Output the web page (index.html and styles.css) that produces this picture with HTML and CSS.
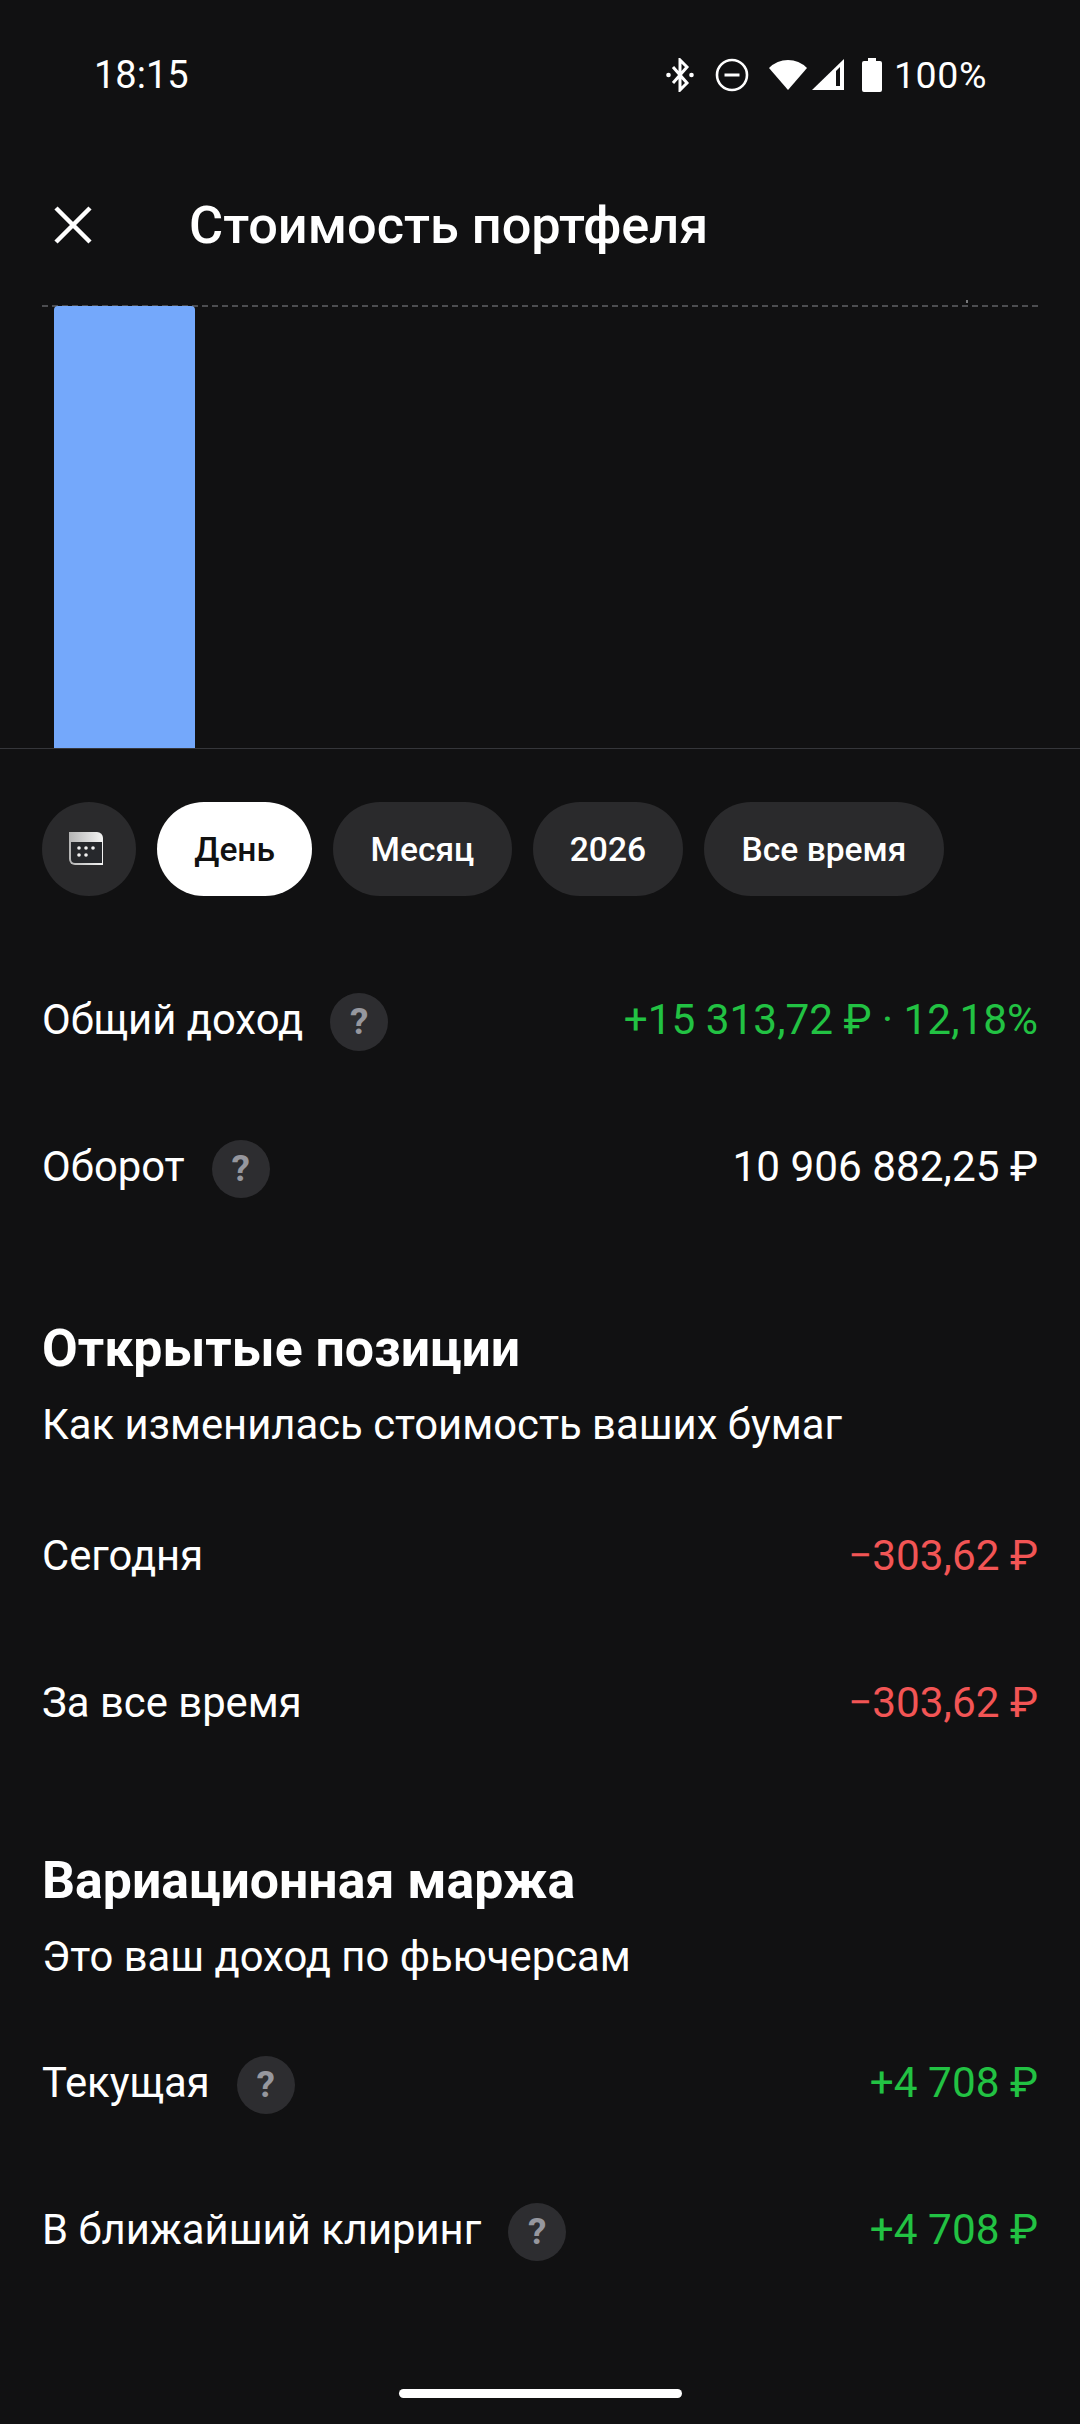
FILE: index.html
```html
<!DOCTYPE html>
<html lang="ru">
<head>
  <meta charset="UTF-8">
  <title>Стоимость портфеля</title>
  <link rel="stylesheet" href="styles.css">
</head>
<body>
  <div class="status-bar">
    <span class="clock">18:15</span>
    <div class="status-icons">
      <svg class="ic-bt" viewBox="0 0 28 34" width="28" height="34"><path d="M7 9l14 16-7 7V2l7 7L7 25" fill="none" stroke="#fff" stroke-width="3"/><circle cx="2.500" cy="17" r="2.300" fill="#fff"/><circle cx="25.500" cy="17" r="2.300" fill="#fff"/></svg>
      <svg class="ic-dnd" viewBox="0 0 34 34" width="34" height="34"><circle cx="17" cy="17" r="15" fill="none" stroke="#fff" stroke-width="2.600"/><path d="M9.500 17h15" stroke="#fff" stroke-width="3"/></svg>
      <svg class="ic-wifi" viewBox="0 0 40 32" width="40" height="32"><path d="M20 31L1 9Q9 1 20 1T39 9z" fill="#fff"/></svg>
      <svg class="ic-signal" viewBox="0 0 32 32" width="32" height="32"><path d="M32 0v31H0z" fill="#fff"/><path d="M24 12v15h4V8z" fill="#111112"/></svg>
      <svg class="ic-batt" viewBox="0 0 20 34" width="20" height="34"><path d="M6 0h8v3h4a2 2 0 0 1 2 2v27a2 2 0 0 1-2 2H2a2 2 0 0 1-2-2V5a2 2 0 0 1 2-2h4z" fill="#fff"/></svg>
      <span class="batt-text">100%</span>
    </div>
  </div>

  <header class="top-bar">
    <svg class="close" viewBox="0 0 40 40" width="40" height="40"><path d="M3 3l34 34M37 3L3 37" stroke="#fff" stroke-width="4.500" fill="none"/></svg>
    <h1>Стоимость портфеля</h1>
  </header>

  <div class="chart">
    <div class="chart-top"></div>
    <div class="bar"></div>
    <div class="tick"></div>
  </div>

  <div class="chips">
    <div class="chip chip-icon">
      <svg viewBox="0 0 36 36" width="36" height="36"><defs><linearGradient id="calTop" x1="0" x2="1" y1="0" y2="0"><stop offset="0" stop-color="#b4b4b4"/><stop offset="1" stop-color="#f4f4f4"/></linearGradient></defs><path d="M1 1h28a6 6 0 0 1 6 6v27H7a6 6 0 0 1-6-6z" fill="url(#calTop)"/><path d="M3 11h31v21H7a4 4 0 0 1-4-4z" fill="#26282c"/><g fill="#f2f2f2"><circle cx="11" cy="17" r="1.800"/><circle cx="18" cy="17" r="1.800"/><circle cx="25" cy="17" r="1.800"/><circle cx="11" cy="24" r="1.800"/><circle cx="18" cy="24" r="1.800"/></g></svg>
    </div>
    <div class="chip active">День</div>
    <div class="chip">Месяц</div>
    <div class="chip">2026</div>
    <div class="chip">Все время</div>
  </div>

  <section class="rows first">
    <div class="row">
      <div class="label">Общий доход <span class="help">?</span></div>
      <div class="value green">+15 313,72 ₽ · 12,18%</div>
    </div>
    <div class="row">
      <div class="label">Оборот <span class="help">?</span></div>
      <div class="value">10 906 882,25 ₽</div>
    </div>
  </section>

  <section class="group">
    <h2>Открытые позиции</h2>
    <p>Как изменилась стоимость ваших бумаг</p>
    <div class="rows">
      <div class="row">
        <div class="label">Сегодня</div>
        <div class="value red">−303,62 ₽</div>
      </div>
      <div class="row">
        <div class="label">За все время</div>
        <div class="value red">−303,62 ₽</div>
      </div>
    </div>
  </section>

  <section class="group second">
    <h2>Вариационная маржа</h2>
    <p>Это ваш доход по фьючерсам</p>
    <div class="rows tight">
      <div class="row">
        <div class="label">Текущая <span class="help">?</span></div>
        <div class="value green">+4 708 ₽</div>
      </div>
      <div class="row">
        <div class="label">В ближайший клиринг <span class="help">?</span></div>
        <div class="value green">+4 708 ₽</div>
      </div>
    </div>
  </section>

  <div class="home-bar"></div>
</body>
</html>
```

FILE: styles.css
```css
* {
  box-sizing: border-box;
}

html,
body {
  margin: 0;
  background: #111112;
}

body {
  position: relative;
  width: 1080px;
  height: 2424px;
  overflow: hidden;
  font-family: Roboto, sans-serif;
  color: #fff;
}

.status-bar {
  display: flex;
  justify-content: space-between;
  align-items: center;
  height: 110px;
  padding: 40px 93px 0 94px;
}

.clock {
  font-size: 38px;
}

.status-icons {
  display: flex;
  align-items: center;
}

.ic-bt {
  margin-right: 21px;
}

.ic-wifi {
  margin: 0 0 0 19px;
}

.ic-signal {
  margin: 0 18px 0 4px;
}

.batt-text {
  margin-left: 12px;
  font-size: 37.500px;
  letter-spacing: 0.6px;
}

.top-bar {
  display: flex;
  align-items: center;
  height: 80px;
  margin-top: 75px;
  padding-left: 53px;
}

.close {
  width: 40px;
  height: 40px;
}

.top-bar h1 {
  margin: 0 0 0 96px;
  font-size: 52.300px;
  font-weight: 500;
}

.chart {
  position: relative;
  height: 444px;
  margin-top: 40px;
  border-bottom: 1px solid #35363a;
}

.chart-top {
  margin: 0 42px;
  border-top: 2px dashed #4c4d50;
}

.bar {
  position: absolute;
  left: 54px;
  top: 1px;
  width: 141px;
  height: 442px;
  background: #74a8fb;
  border-radius: 4px 4px 0 0;
}

.tick {
  position: absolute;
  left: 966px;
  top: -5px;
  width: 2px;
  height: 3px;
  background: #77787a;
}

.chips {
  display: flex;
  gap: 21px;
  margin-top: 53px;
  padding-left: 42px;
}

.chip {
  display: flex;
  align-items: center;
  justify-content: center;
  height: 94px;
  padding: 0 37.250px;
  border-radius: 47px;
  background: #2a2a2c;
  font-size: 33.600px;
  font-weight: 500;
}

.chip-icon {
  width: 94px;
  padding: 0 6px 0 0;
}

.chip.active {
  background: #fff;
  color: #111;
}

.rows.first {
  margin-top: 50px;
}

.row {
  display: flex;
  justify-content: space-between;
  align-items: center;
  height: 147px;
  padding: 0 42px;
  font-size: 41.800px;
}

.value {
  font-size: 42.300px;
}

.label {
  display: flex;
  align-items: center;
  gap: 27px;
}

.help {
  display: flex;
  align-items: center;
  justify-content: center;
  width: 58px;
  height: 58px;
  margin-top: 4px;
  border-radius: 50%;
  background: #2d2d30;
  color: #96979e;
  font-size: 37px;
  font-weight: 700;
}

.green {
  color: #22c243;
}

.red {
  color: #f25555;
}

.group {
  margin-top: 74px;
}

.group.second {
  margin-top: 70px;
}

.group h2 {
  margin: 0;
  padding: 0 42px;
  font-size: 51.800px;
  line-height: 70px;
  font-weight: 700;
}

.group p {
  margin: 6px 0 0;
  padding: 0 42px;
  font-size: 41.800px;
  line-height: 70px;
}

.group .rows {
  margin-top: 22px;
}

.group .rows.tight {
  margin-top: 17px;
}

.home-bar {
  position: absolute;
  left: 399px;
  top: 2389px;
  width: 283px;
  height: 9px;
  border-radius: 5px;
  background: #fff;
}
```
